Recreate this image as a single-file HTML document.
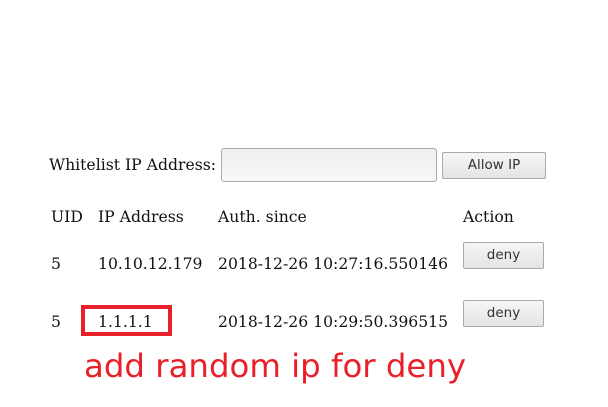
<!DOCTYPE html>
<html><head><style>
body{margin:0;width:608px;height:407px;background:#fff;position:relative;overflow:hidden;font-family:"DejaVu Serif","Liberation Serif",serif;font-size:15.65px;color:#111}
.t{position:absolute;white-space:nowrap;line-height:18px}
.btn{position:absolute;box-sizing:border-box;border:1px solid #aaa;border-radius:2px;background:linear-gradient(#f6f6f6,#e4e4e4);font-family:"DejaVu Sans","Liberation Sans",sans-serif;font-size:13.5px;color:#333;text-align:center}
</style></head><body>
<div class="t" style="left:49px;top:156px">Whitelist IP Address:</div>
<div style="position:absolute;left:221px;top:148px;width:216px;height:34px;box-sizing:border-box;border:1px solid #aaa;border-radius:3px;background:linear-gradient(#eee,#f8f8f8)"></div>
<div class="btn" style="left:442px;top:152px;width:104px;height:27px;line-height:25px">Allow IP</div>
<div class="t" style="left:51px;top:208px">UID</div>
<div class="t" style="left:98px;top:208px">IP Address</div>
<div class="t" style="left:218px;top:208px">Auth. since</div>
<div class="t" style="left:463px;top:208px">Action</div>
<div class="t" style="left:51px;top:255px">5</div>
<div class="t" style="left:98px;top:255px">10.10.12.179</div>
<div class="t" style="left:218px;top:255px">2018-12-26 10:27:16.550146</div>
<div class="btn" style="left:463px;top:242px;width:81px;height:27px;line-height:25px">deny</div>
<div class="t" style="left:51px;top:313px">5</div>
<div class="t" style="left:98px;top:313px">1.1.1.1</div>
<div class="t" style="left:218px;top:313px">2018-12-26 10:29:50.396515</div>
<div class="btn" style="left:463px;top:300px;width:81px;height:27px;line-height:25px">deny</div>
<div style="position:absolute;left:81px;top:305px;width:91px;height:31px;box-sizing:border-box;border:4px solid #e8202a"></div>
<div class="t" style="left:84px;top:346px;font-family:'DejaVu Sans','Liberation Sans',sans-serif;font-size:32.4px;line-height:40px;color:#e8202a">add random ip for deny</div>
</body></html>
